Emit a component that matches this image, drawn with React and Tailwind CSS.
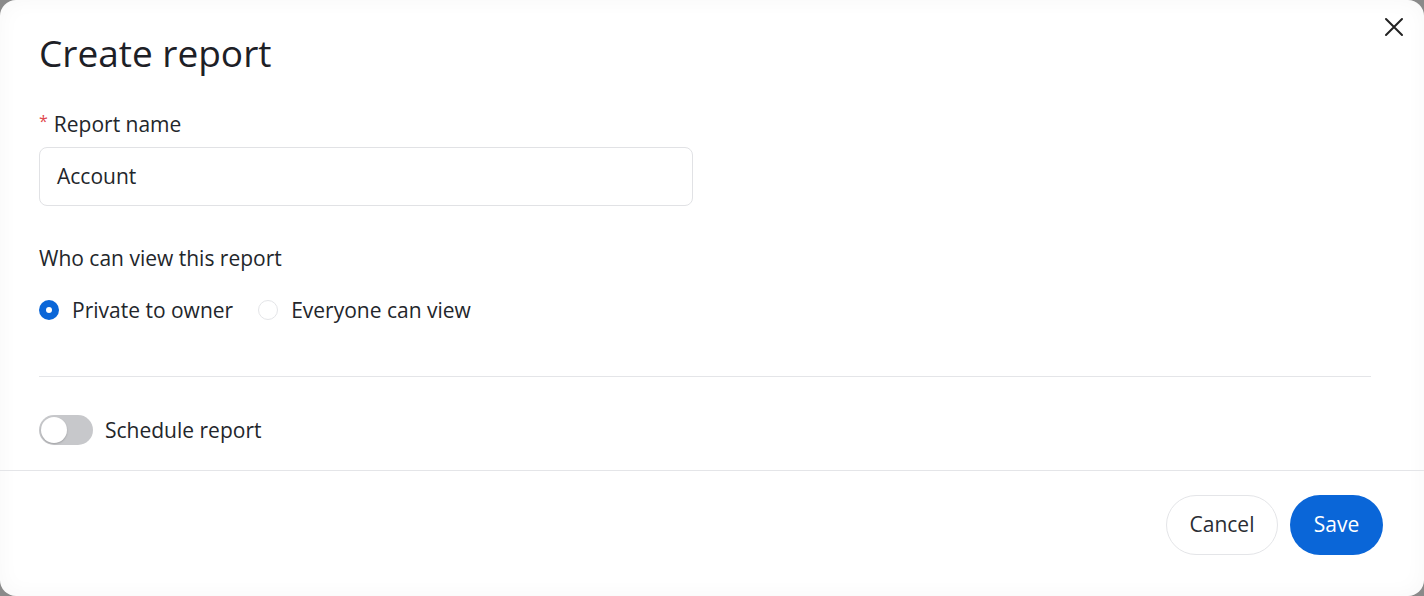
import React from "react";

export default function App() {
  return (
    <div className="w-[1424px] h-[596px] bg-[#8a8a8a] overflow-hidden" style={{ fontFamily: '"Open Sans", "Noto Sans", sans-serif' }}>
      <div className="relative w-full h-full bg-white rounded-[16px] flex flex-col text-[#23262b] shadow-[inset_0_0_22px_rgba(0,0,0,0.035)]">
        <button className="absolute right-[20px] top-[17px] w-[20px] h-[20px] flex items-center justify-center text-[#222]">
          <svg width="20" height="20" viewBox="0 0 20 20" fill="none" stroke="currentColor" strokeWidth="2" strokeLinecap="round">
            <path d="M2 2L18 18M18 2L2 18" />
          </svg>
        </button>
        <div className="flex flex-col px-[39px] pt-[29px] flex-1">
          <h1 className="text-[37px] leading-[48px] font-medium text-[#1d2026]">Create report</h1>
          <div className="mt-[33px] flex items-center text-[21px] leading-[28px]">
            <span className="text-[#e0474c] text-[16px] mr-[6px] -mt-[6px]">*</span>
            <span>Report name</span>
          </div>
          <div className="mt-[9px] w-[654px] h-[59px] border border-[#e1e2e5] rounded-[8px] flex items-center px-[17px] text-[21px]">
            Account
          </div>
          <div className="mt-[38px] text-[21px] leading-[28px]">Who can view this report</div>
          <div className="mt-[24px] flex items-center text-[21px] leading-[28px]">
            <span className="w-[20px] h-[20px] rounded-full bg-[#0a66d8] flex items-center justify-center">
              <span className="w-[6px] h-[6px] rounded-full bg-white" />
            </span>
            <span className="ml-[13px]">Private to owner</span>
            <span className="ml-[25px] w-[20px] h-[20px] rounded-full border border-[#e4e5e8] bg-white" />
            <span className="ml-[13px]">Everyone can view</span>
          </div>
          <div className="mt-[52px] h-px bg-[#e4e5e8] mr-[14px]" />
          <div className="mt-[38px] flex items-center">
            <span className="w-[54px] h-[30px] rounded-full bg-[#c7c8cb] flex items-center px-[2px]">
              <span className="w-[26px] h-[26px] rounded-full bg-white shadow-[0_1px_2px_rgba(0,0,0,0.2)]" />
            </span>
            <span className="ml-[12px] text-[21px] leading-[28px]">Schedule report</span>
          </div>
        </div>
        <div className="h-px bg-[#e4e5e8]" />
        <div className="h-[125px] flex items-start justify-end pt-[24px] pr-[41px] gap-[12px]">
          <button className="w-[112px] h-[60px] rounded-full border border-[#e4e5e8] bg-white text-[21px] text-[#2a2d33]">Cancel</button>
          <button className="w-[93px] h-[60px] rounded-full bg-[#0a66d8] text-[21px] text-white">Save</button>
        </div>
      </div>
    </div>
  );
}
